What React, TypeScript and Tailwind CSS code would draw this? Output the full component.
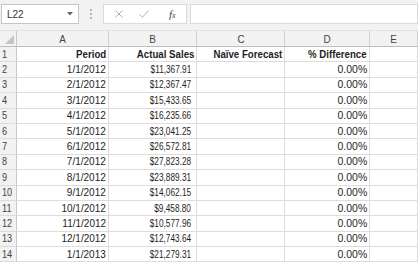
import React from "react";

const rows: [string, string, string][] = [
  ["1/1/2012", "$11,367.91", "0.00%"],
  ["2/1/2012", "$12,367.47", "0.00%"],
  ["3/1/2012", "$15,433.65", "0.00%"],
  ["4/1/2012", "$16,235.66", "0.00%"],
  ["5/1/2012", "$23,041.25", "0.00%"],
  ["6/1/2012", "$26,572.81", "0.00%"],
  ["7/1/2012", "$27,823.28", "0.00%"],
  ["8/1/2012", "$23,889.31", "0.00%"],
  ["9/1/2012", "$14,062.15", "0.00%"],
  ["10/1/2012", "$9,458.80", "0.00%"],
  ["11/1/2012", "$10,577.96", "0.00%"],
  ["12/1/2012", "$12,743.64", "0.00%"],
  ["1/1/2013", "$21,279.31", "0.00%"],
];

type Kind = "head" | "date" | "money" | "pct";

const scaleClass: Record<Kind, string> = {
  head: "scale-x-[0.88] font-bold",
  date: "scale-x-[0.91]",
  money: "scale-x-[0.75]",
  pct: "scale-x-[0.95]",
};

function RowHead({ n }: { n: number }) {
  return (
    <div className="h-[15.4px] bg-[#f2f2f2] border-r border-b border-r-[#c8c8c8] border-b-[#dcdcdc] pl-[2px] flex items-center text-[#444]">
      <span className="inline-block origin-left scale-x-[0.83]">{n}</span>
    </div>
  );
}

function Cell({ children, kind }: { children?: React.ReactNode; kind?: Kind }) {
  return (
    <div
      className={
        "h-[15.4px] border-r border-b border-[#dcdcdc] flex items-center justify-end text-[#1e1e1e] " +
        (kind === "money" ? "pr-[5px]" : "pr-[2px]")
      }
    >
      {children !== undefined && kind && (
        <span className={"inline-block whitespace-nowrap origin-right " + scaleClass[kind]}>
          {children}
        </span>
      )}
    </div>
  );
}

export default function App() {
  return (
    <div className="w-[418px] h-[262px] overflow-hidden bg-white font-['Liberation_Sans',sans-serif] text-[11px] leading-none">
      {/* top bar */}
      <div className="h-[31px] bg-[#f2f2f2] flex items-start pt-[4px] border-b border-[#e2e2e2]">
        <div className="ml-[1px] w-[78px] h-[20px] bg-white border border-[#c6c6c6] flex items-center justify-between pl-[5px] pr-[5px] text-[#333]">
          <span className="inline-block origin-left scale-x-[0.9]">L22</span>
          <svg width="6" height="4" viewBox="0 0 6 4">
            <path d="M0 0 L6 0 L3 3.5 Z" fill="#666" />
          </svg>
        </div>
        <div className="w-[24px] h-[20px] flex flex-col items-center justify-center gap-[2px]">
          <div className="w-[2px] h-[2px] bg-[#b4b4b4]" />
          <div className="w-[2px] h-[2px] bg-[#b4b4b4]" />
          <div className="w-[2px] h-[2px] bg-[#b4b4b4]" />
        </div>
        <div className="w-[84px] h-[20px] bg-white border border-[#dadada] flex items-center">
          <svg className="ml-[11px]" width="8" height="8" viewBox="0 0 8 8">
            <path d="M0.5 0.5 L7.5 7.5 M7.5 0.5 L0.5 7.5" stroke="#b0b0b0" strokeWidth="1" />
          </svg>
          <svg className="ml-[16px]" width="10" height="8" viewBox="0 0 10 8">
            <path d="M0.5 4.5 L3.5 7.2 L9.5 0.5" stroke="#b0b0b0" strokeWidth="1" fill="none" />
          </svg>
          <span className="ml-[20px] font-['Liberation_Serif',serif] italic text-[11px] text-[#444]">
            f<span className="text-[8px]">x</span>
          </span>
        </div>
        <div className="ml-[3px] flex-1 h-[20px] bg-white border border-[#dadada]" />
      </div>

      {/* grid */}
      <div className="grid grid-cols-[17px_92px_88px_88px_85px_1fr]">
        {/* header row */}
        <div className="h-[16px] bg-[#f2f2f2] border-r border-b border-r-[#c8c8c8] border-b-[#bdbdbd] relative">
          <svg className="absolute right-[2px] bottom-[2px]" width="9" height="9" viewBox="0 0 9 9">
            <path d="M9 0 L9 9 L0 9 Z" fill="#c4c4c4" />
          </svg>
        </div>
        {["A", "B", "C", "D", "E"].map((c) => (
          <div
            key={c}
            className="h-[16px] bg-[#f2f2f2] border-r border-b border-r-[#d0d0d0] border-b-[#bdbdbd] flex items-center justify-center text-[#444] pt-[1px]"
          >
            <span className="inline-block scale-x-[0.9]">{c}</span>
          </div>
        ))}

        {/* row 1 */}
        <RowHead n={1} />
        <Cell kind="head">Period</Cell>
        <Cell kind="head">Actual Sales</Cell>
        <Cell kind="head">Naïve Forecast</Cell>
        <Cell kind="head">% Difference</Cell>
        <Cell />

        {rows.map((r, i) => (
          <React.Fragment key={i}>
            <RowHead n={i + 2} />
            <Cell kind="date">{r[0]}</Cell>
            <Cell kind="money">{r[1]}</Cell>
            <Cell />
            <Cell kind="pct">{r[2]}</Cell>
            <Cell />
          </React.Fragment>
        ))}
      </div>
    </div>
  );
}
